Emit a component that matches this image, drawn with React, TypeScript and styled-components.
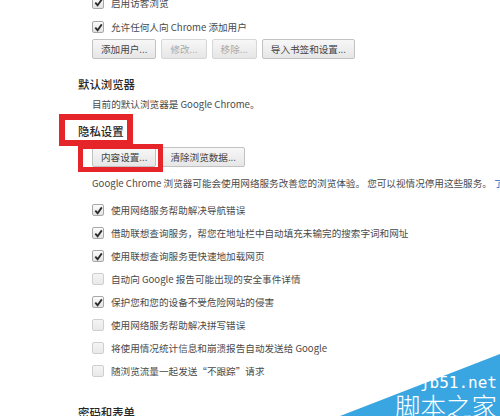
import React from "react";
import styled, { createGlobalStyle } from "styled-components";

const GlobalStyle = createGlobalStyle`
  html, body { margin: 0; padding: 0; background: #fff; overflow: hidden; }
  body { font-family: "Noto Sans CJK SC", "Microsoft YaHei", sans-serif; }
`;

const Page = styled.div`
  position: relative;
  width: 500px;
  height: 416px;
  overflow: hidden;
  background: #fff;
`;

const Content = styled.div`
  display: flex;
  flex-direction: column;
  margin-top: -10px;
  padding-left: 78px;
`;

const Heading = styled.div<{ $mt: number }>`
  margin-top: ${(p) => p.$mt}px;
  height: 16px;
  line-height: 16px;
  font-size: 11.4px;
  font-weight: 500;
  color: #262626;
  white-space: nowrap;
`;

const Text = styled.div<{ $mt: number }>`
  margin-top: ${(p) => p.$mt}px;
  margin-left: 14px;
  height: 16px;
  line-height: 16px;
  font-size: 9.6px;
  color: #4a4a4a;
  white-space: nowrap;
`;

const Link = styled.span`
  color: #1c5fc7;
`;

const CheckRow = styled.label<{ $h: number }>`
  display: flex;
  align-items: center;
  gap: 7px;
  height: ${(p) => p.$h}px;
  margin-left: 14px;
  font-size: 9.6px;
  color: #4a4a4a;
  white-space: nowrap;
`;

const Box = styled.span<{ $on: boolean }>`
  display: flex;
  align-items: center;
  justify-content: center;
  width: 10px;
  height: 10px;
  border: 1px solid ${(p) => (p.$on ? "#a8a8a8" : "#cfcfcf")};
  border-radius: 2px;
  background: ${(p) =>
    p.$on ? "linear-gradient(#fdfdfd, #e2e2e2)" : "linear-gradient(#f4f4f4, #e9e9e9)"};
  flex-shrink: 0;
`;

const ButtonRow = styled.div<{ $mt: number }>`
  display: flex;
  gap: 5px;
  margin-top: ${(p) => p.$mt}px;
  margin-left: 14px;
  height: 20px;
`;

const Button = styled.div<{ $disabled?: boolean }>`
  display: flex;
  align-items: center;
  justify-content: center;
  height: 20px;
  box-sizing: border-box;
  padding: 0 8px;
  border: 1px solid ${(p) => (p.$disabled ? "#d6d6d6" : "#c2c2c2")};
  border-radius: 2px;
  background: linear-gradient(#f7f7f7, #e6e6e6);
  font-size: 9.6px;
  color: ${(p) => (p.$disabled ? "#a9a9a9" : "#444")};
  white-space: nowrap;
`;

const CheckList = styled.div`
  display: flex;
  flex-direction: column;
  margin-top: 7.5px;
`;

const RedBox = styled.div<{ $x: number; $y: number; $w: number; $h: number; $b: number }>`
  position: absolute;
  left: ${(p) => p.$x}px;
  top: ${(p) => p.$y}px;
  width: ${(p) => p.$w}px;
  height: ${(p) => p.$h}px;
  box-sizing: border-box;
  border: ${(p) => p.$b}px solid #e5252a;
`;

const Watermark = styled.div`
  position: absolute;
  right: 0;
  bottom: 0;
  width: 160px;
  height: 64px;
`;

const WmSvg = styled.svg`
  position: absolute;
  left: 0;
  top: 0;
`;

const WmText = styled.div`
  position: absolute;
  right: 3px;
  bottom: -1px;
  display: flex;
  flex-direction: column;
  align-items: flex-end;
  color: #fff;
  line-height: 1;
`;

const WmUrl = styled.span`
  font-family: "DejaVu Sans Mono", monospace;
  font-size: 16px;
  font-weight: 300;
  margin-bottom: 1px;
`;

const WmName = styled.span`
  font-family: "Noto Sans CJK SC", sans-serif;
  font-weight: 300;
  font-size: 25.5px;
`;

const Tick = () => (
  <svg width="9" height="9" viewBox="0 0 9 9">
    <path d="M1.3 4.6 L3.6 7.2 L7.8 1.4" fill="none" stroke="#2b2b2b" strokeWidth="1.8" />
  </svg>
);

const Check = ({ on, label, h = 23 }: { on: boolean; label: string; h?: number }) => (
  <CheckRow $h={h}>
    <Box $on={on}>{on && <Tick />}</Box>
    <span>{label}</span>
  </CheckRow>
);

const privacy: [boolean, string][] = [
  [true, "使用网络服务帮助解决导航错误"],
  [true, "借助联想查询服务，帮您在地址栏中自动填充未输完的搜索字词和网址"],
  [true, "使用联想查询服务更快速地加载网页"],
  [false, "自动向 Google 报告可能出现的安全事件详情"],
  [true, "保护您和您的设备不受危险网站的侵害"],
  [false, "使用网络服务帮助解决拼写错误"],
  [false, "将使用情况统计信息和崩溃报告自动发送给 Google"],
  [false, "随浏览流量一起发送\u201c不跟踪\u201d请求"],
];

export default function App() {
  return (
    <Page>
      <GlobalStyle />
      <Content>
        <Check on label="启用访客浏览" h={25} />
        <Check on label="允许任何人向 Chrome 添加用户" h={24} />
        <ButtonRow $mt={0}>
          <Button>添加用户...</Button>
          <Button $disabled>修改...</Button>
          <Button $disabled>移除...</Button>
          <Button>导入书签和设置...</Button>
        </ButtonRow>
        <Heading $mt={17}>默认浏览器</Heading>
        <Text $mt={4}>目前的默认浏览器是 Google Chrome。</Text>
        <Heading $mt={11}>隐私设置</Heading>
        <ButtonRow $mt={8}>
          <Button>内容设置...</Button>
          <Button>清除浏览数据...</Button>
        </ButtonRow>
        <Text $mt={8}>
          Google Chrome 浏览器可能会使用网络服务改善您的浏览体验。 您可以视情况停用这些服务。 <Link>了解详情</Link>
        </Text>
        <CheckList>
          {privacy.map(([on, label]) => (
            <Check key={label} on={on} label={label} />
          ))}
        </CheckList>
        <Heading $mt={21.5}>密码和表单</Heading>
      </Content>
      <RedBox $x={59} $y={114} $w={74} $h={32} $b={6} />
      <RedBox $x={78} $y={144} $w={85} $h={28} $b={5} />
      <Watermark>
        <WmSvg width="160" height="64" viewBox="0 0 160 64">
          <polygon points="0,64 160,2 160,64" fill="#39a6e2" />
          <polygon points="20,40 80,10 90,18 30,48" fill="#ffffff" opacity="0.25" />
        </WmSvg>
        <WmText>
          <WmUrl>jb51.net</WmUrl>
          <WmName>脚本之家</WmName>
        </WmText>
      </Watermark>
    </Page>
  );
}
